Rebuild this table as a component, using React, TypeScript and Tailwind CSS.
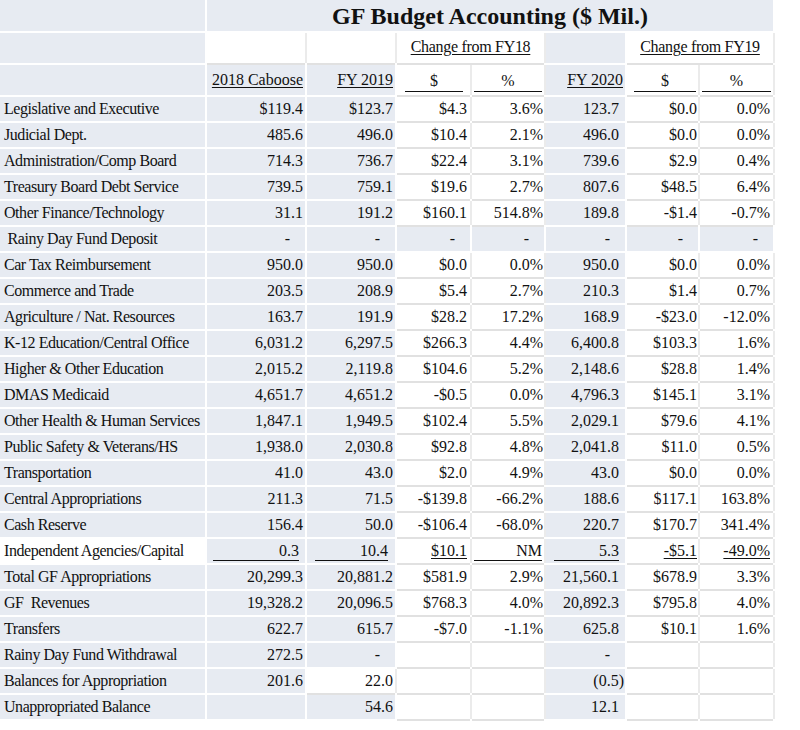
const G = "bg-[#e7ebf2]";
const W = "bg-white shadow-[0_2px_0_#e1e1e1,2px_0_0_#ebebeb]";

type Cell = {
  v: string;
  white?: boolean;
  line?: boolean;
  under?: boolean;
  dash?: boolean;
};

type Row = { label: string; labelWhite?: boolean; cells: Cell[] };

// column order: 2018 Caboose, FY 2019, $ FY18, % FY18, FY 2020, $ FY19, % FY19
const whiteCols = [false, false, true, true, false, true, true];
const padRight = ["pr-[2px]", "pr-[2px]", "pr-[3px]", "pr-[1px]", "pr-[6px]", "pr-[1px]", "pr-[3px]"];
const linePad = ["mx-[6px]", "ml-[8px] mr-[7px]", "ml-[8px] mr-[7px]", "mx-[2px]", "ml-[8px] mr-[6px]", "ml-[7px] mr-[2px]", "mx-[2px]"];

const plain = (label: string, vals: string[]): Row => ({
  label,
  cells: vals.map((v, i) => ({ v, white: whiteCols[i] })),
});

const rows: Row[] = [
  plain("Legislative and Executive", ["$119.4", "$123.7", "$4.3", "3.6%", "123.7", "$0.0", "0.0%"]),
  plain("Judicial Dept.", ["485.6", "496.0", "$10.4", "2.1%", "496.0", "$0.0", "0.0%"]),
  plain("Administration/Comp Board", ["714.3", "736.7", "$22.4", "3.1%", "739.6", "$2.9", "0.4%"]),
  plain("Treasury Board Debt Service", ["739.5", "759.1", "$19.6", "2.7%", "807.6", "$48.5", "6.4%"]),
  plain("Other Finance/Technology", ["31.1", "191.2", "$160.1", "514.8%", "189.8", "-$1.4", "-0.7%"]),
  {
    label: " Rainy Day Fund Deposit",
    cells: Array.from({ length: 7 }, () => ({ v: "-", dash: true })),
  },
  plain("Car Tax Reimbursement", ["950.0", "950.0", "$0.0", "0.0%", "950.0", "$0.0", "0.0%"]),
  plain("Commerce and Trade", ["203.5", "208.9", "$5.4", "2.7%", "210.3", "$1.4", "0.7%"]),
  plain("Agriculture / Nat. Resources", ["163.7", "191.9", "$28.2", "17.2%", "168.9", "-$23.0", "-12.0%"]),
  plain("K-12 Education/Central Office", ["6,031.2", "6,297.5", "$266.3", "4.4%", "6,400.8", "$103.3", "1.6%"]),
  plain("Higher & Other Education", ["2,015.2", "2,119.8", "$104.6", "5.2%", "2,148.6", "$28.8", "1.4%"]),
  plain("DMAS Medicaid", ["4,651.7", "4,651.2", "-$0.5", "0.0%", "4,796.3", "$145.1", "3.1%"]),
  plain("Other Health & Human Services", ["1,847.1", "1,949.5", "$102.4", "5.5%", "2,029.1", "$79.6", "4.1%"]),
  plain("Public Safety & Veterans/HS", ["1,938.0", "2,030.8", "$92.8", "4.8%", "2,041.8", "$11.0", "0.5%"]),
  plain("Transportation", ["41.0", "43.0", "$2.0", "4.9%", "43.0", "$0.0", "0.0%"]),
  plain("Central Appropriations", ["211.3", "71.5", "-$139.8", "-66.2%", "188.6", "$117.1", "163.8%"]),
  plain("Cash Reserve", ["156.4", "50.0", "-$106.4", "-68.0%", "220.7", "$170.7", "341.4%"]),
  {
    label: "Independent Agencies/Capital",
    labelWhite: true,
    cells: [
      { v: "0.3", line: true },
      { v: "10.4", line: true },
      { v: "$10.1", white: true, under: true },
      { v: "NM", white: true, line: true },
      { v: "5.3", line: true },
      { v: "-$5.1", white: true, under: true },
      { v: "-49.0%", white: true, under: true },
    ],
  },
  plain("Total GF Appropriations", ["20,299.3", "20,881.2", "$581.9", "2.9%", "21,560.1", "$678.9", "3.3%"]),
  plain("GF  Revenues", ["19,328.2", "20,096.5", "$768.3", "4.0%", "20,892.3", "$795.8", "4.0%"]),
  plain("Transfers", ["622.7", "615.7", "-$7.0", "-1.1%", "625.8", "$10.1", "1.6%"]),
  {
    label: "Rainy Day Fund Withdrawal",
    cells: [
      { v: "272.5" },
      { v: "-", dash: true },
      { v: "", white: true },
      { v: "", white: true },
      { v: "-", dash: true },
      { v: "", white: true },
      { v: "", white: true },
    ],
  },
  {
    label: "Balances for Appropriation",
    cells: [
      { v: "201.6" },
      { v: "22.0", white: true },
      { v: "", white: true },
      { v: "", white: true },
      { v: "(0.5)" },
      { v: "", white: true },
      { v: "", white: true },
    ],
  },
  {
    label: "Unappropriated Balance",
    cells: [
      { v: "" },
      { v: "54.6" },
      { v: "", white: true },
      { v: "", white: true },
      { v: "12.1" },
      { v: "", white: true },
      { v: "", white: true },
    ],
  },
];

const DataCell = ({ c, i }: { c: Cell; i: number }) => {
  const bg = c.white ? W : G;
  if (c.line) {
    return (
      <div className={`${bg} flex flex-col justify-end pb-[2px]`}>
        <div className={`${linePad[i]} border-b-[1.5px] border-[#111] text-right leading-[19px]`}>{c.v}</div>
      </div>
    );
  }
  const pr = c.dash ? "pr-[15px]" : c.v === "(0.5)" ? "pr-[1px]" : padRight[i];
  return (
    <div className={`${bg} flex items-center justify-end ${pr}`}>
      <span className={c.under ? "underline underline-offset-2" : ""}>{c.v}</span>
    </div>
  );
};

const HeadUnit = ({ sym, cls }: { sym: string; cls: string }) => (
  <div className={`${W} flex flex-col justify-end pb-[3px]`}>
    <div className={`${cls} border-b-[1.5px] border-[#111] text-center leading-[20px]`}>{sym}</div>
  </div>
);

const App = () => {
  return (
    <div className="w-[800px] h-[730px] bg-white text-[#111] font-['Liberation_Serif',serif] text-[16px]">
      <div className="grid grid-cols-[205px_98px_88px_73px_72px_79px_71px_73px] grid-rows-[31px_30px_30px_repeat(24,24px)] gap-[2px]">
        {/* title row */}
        <div className={G} />
        <div className={`${G} col-span-7 flex items-center justify-center text-[24px] font-bold`}>
          GF Budget Accounting ($ Mil.)
        </div>

        {/* change from row */}
        <div className={G} />
        <div className={W} />
        <div className={W} />
        <div className={`${W} col-span-2 flex items-end justify-center pb-[4px] tracking-[-0.3px]`}>
          <span className="underline underline-offset-2">Change from FY18</span>
        </div>
        <div className={G} />
        <div className={`${W} col-span-2 flex items-end justify-center pb-[4px] tracking-[-0.3px]`}>
          <span className="underline underline-offset-2">Change from FY19</span>
        </div>

        {/* column headers */}
        <div className={G} />
        <div className={`${G} flex items-end justify-end pr-[2px] pb-[3px]`}>
          <span className="underline underline-offset-2">2018 Caboose</span>
        </div>
        <div className={`${G} flex items-end justify-end pr-[2px] pb-[3px]`}>
          <span className="underline underline-offset-2">FY 2019</span>
        </div>
        <HeadUnit sym="$" cls="ml-[8px] mr-[7px]" />
        <HeadUnit sym="%" cls="mx-[2px]" />
        <div className={`${G} flex items-end justify-end pr-[2px] pb-[3px]`}>
          <span className="underline underline-offset-2">FY 2020</span>
        </div>
        <HeadUnit sym="$" cls="ml-[7px] mr-[2px]" />
        <HeadUnit sym="%" cls="mx-[2px]" />

        {rows.map((r) => (
          <div key={r.label} className="contents">
            <div
              className={`${r.labelWhite ? "bg-white" : G} flex items-center pl-[4px] whitespace-pre tracking-[-0.45px]`}
            >
              {r.label}
            </div>
            {r.cells.map((c, i) => (
              <DataCell key={i} c={c} i={i} />
            ))}
          </div>
        ))}
      </div>
    </div>
  );
};

export default App;
